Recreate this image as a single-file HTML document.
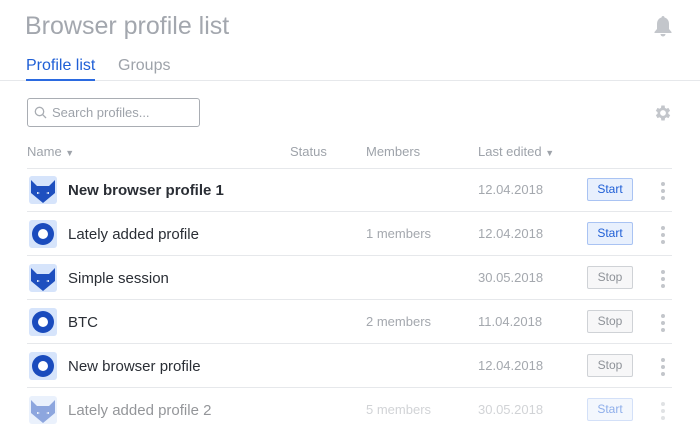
<!DOCTYPE html>
<html><head><style>
body{margin:0;width:700px;height:440px;overflow:hidden;background:#fff;font-family:"Liberation Sans",sans-serif;position:relative}
.a{position:absolute}
.title{left:25px;top:12px;font-size:25px;color:#a3a7ae}
.tab{top:57px;font-size:16px}
.hd{top:144px;font-size:13px;color:#9ea3aa}
.row{position:absolute;left:0;width:700px;height:44px}
.sep{position:absolute;left:27px;width:645px;height:1px;background:#e6e8eb}
.ic{position:absolute;left:29px;top:8px;width:28px;height:28px;background:#d6e4fb;border-radius:3px;overflow:hidden}
.nm{position:absolute;left:68px;top:14px;font-size:15px;color:#2a2e35}
.mem{position:absolute;left:366px;top:14px;font-size:13px;color:#a4a8ae}
.dt{position:absolute;left:478px;top:14px;font-size:13px;color:#a4a8ae}
.btn{position:absolute;left:587px;top:10px;width:46px;height:23px;border-radius:2px;font-size:12px;text-align:center;line-height:21px;box-sizing:border-box}
.start{background:#e8f0fd;border:1px solid #a9c3f3;color:#1f5fd6}
.stop{background:#f7f7f8;border:1px solid #cfd2d6;color:#8e9298}
.dots{position:absolute;left:661px;top:14px;width:4px}
.dots i{display:block;width:4px;height:4px;border-radius:2px;background:#c3c6cb;margin-bottom:3px}
</style></head><body>
<div class="a title">Browser profile list</div>
<svg class="a" style="left:653px;top:15px" width="20" height="22" viewBox="0 0 20 22"><path d="M10 1c1 0 1.5.7 1.5 1.5 3 .8 4.5 3.3 4.5 6.5v5l2.5 3v1H1.5v-1L4 14V9c0-3.2 1.5-5.7 4.5-6.5C8.5 1.7 9 1 10 1z" fill="#c3c6cb"/><path d="M7.5 19h5a2.5 2.5 0 0 1-5 0z" fill="#c3c6cb"/></svg>
<div class="a tab" style="left:26px;color:#1f5fd6">Profile list</div>
<div class="a tab" style="left:118px;color:#9ea3aa">Groups</div>
<div class="a" style="left:0;top:80px;width:700px;height:1px;background:#e6e8eb"></div>
<div class="a" style="left:26px;top:79px;width:69px;height:2px;background:#2b6ae0"></div>
<div class="a" style="left:27px;top:98px;width:173px;height:29px;border:1px solid #a9adb3;border-radius:3px;box-sizing:border-box"></div>
<svg class="a" style="left:34px;top:106px" width="13" height="13" viewBox="0 0 13 13"><circle cx="5.5" cy="5.5" r="4.2" stroke="#a9adb3" stroke-width="1.3" fill="none"/><path d="M8.6 8.6L12 12" stroke="#a9adb3" stroke-width="1.3"/></svg>
<div class="a" style="left:52px;top:105px;font-size:13px;color:#9ea3aa">Search profiles...</div>
<svg class="a" style="left:653px;top:103px" width="20" height="20" viewBox="0 0 24 24"><path fill="#c3c6cb" d="M19.4 13a7.5 7.5 0 0 0 0-2l2.1-1.6-2-3.5-2.5 1a7 7 0 0 0-1.7-1L15 3h-4l-.4 2.9a7 7 0 0 0-1.700 1l-2.5-1-2 3.5L6.5 11a7.500 7.500 0 0 0 0 2l-2.100 1.6 2 3.5 2.5-1a7 7 0 0 0 1.7 1L11 21h4l.4-2.9a7 7 0 0 0 1.7-1l2.5 1 2-3.5zM13 15.5a3.5 3.5 0 1 1 0-7 3.5 3.5 0 0 1 0 7z" transform="translate(-1 0)"/></svg>
<div class="a hd" style="left:27px">Name <span style="font-size:9px">▼</span></div>
<div class="a hd" style="left:290px">Status</div>
<div class="a hd" style="left:366px">Members</div>
<div class="a hd" style="left:478px">Last edited <span style="font-size:9px">▼</span></div>
<div class="sep" style="top:168px"></div>

<div class="row" style="top:168px"><div class="ic"><svg width="28" height="28" viewBox="0 0 28 28"><path d="M2 4l6 6h12l6-6v13l-12 10L2 17z" fill="#1e4fbf"/><path d="M8 16l3 1-3 1zM20 16l-3 1 3 1z" fill="#fff"/></svg></div><div class="nm" style="font-weight:bold">New browser profile 1</div><div class="dt">12.04.2018</div><div class="btn start">Start</div><div class="dots"><i></i><i></i><i></i></div><div class="sep" style="top:43px"></div></div>

<div class="row" style="top:212px"><div class="ic"><svg width="28" height="28" viewBox="0 0 28 28"><circle cx="14" cy="14" r="11" fill="#1a4bbd"/><circle cx="14" cy="14" r="5" fill="#fff"/></svg></div><div class="nm">Lately added profile</div><div class="mem">1 members</div><div class="dt">12.04.2018</div><div class="btn start">Start</div><div class="dots"><i></i><i></i><i></i></div><div class="sep" style="top:43px"></div></div>

<div class="row" style="top:256px"><div class="ic"><svg width="28" height="28" viewBox="0 0 28 28"><path d="M2 4l6 6h12l6-6v13l-12 10L2 17z" fill="#1e4fbf"/><path d="M8 16l3 1-3 1zM20 16l-3 1 3 1z" fill="#fff"/></svg></div><div class="nm">Simple session</div><div class="dt">30.05.2018</div><div class="btn stop">Stop</div><div class="dots"><i></i><i></i><i></i></div><div class="sep" style="top:43px"></div></div>

<div class="row" style="top:300px"><div class="ic"><svg width="28" height="28" viewBox="0 0 28 28"><circle cx="14" cy="14" r="11" fill="#1a4bbd"/><circle cx="14" cy="14" r="5" fill="#fff"/></svg></div><div class="nm">BTC</div><div class="mem">2 members</div><div class="dt">11.04.2018</div><div class="btn stop">Stop</div><div class="dots"><i></i><i></i><i></i></div><div class="sep" style="top:43px"></div></div>

<div class="row" style="top:344px"><div class="ic"><svg width="28" height="28" viewBox="0 0 28 28"><circle cx="14" cy="14" r="11" fill="#1a4bbd"/><circle cx="14" cy="14" r="5" fill="#fff"/></svg></div><div class="nm">New browser profile</div><div class="dt">12.04.2018</div><div class="btn stop">Stop</div><div class="dots"><i></i><i></i><i></i></div><div class="sep" style="top:43px"></div></div>

<div class="row" style="top:388px;opacity:.5"><div class="ic"><svg width="28" height="28" viewBox="0 0 28 28"><path d="M2 4l6 6h12l6-6v13l-12 10L2 17z" fill="#1e4fbf"/><path d="M8 16l3 1-3 1zM20 16l-3 1 3 1z" fill="#fff"/></svg></div><div class="nm">Lately added profile 2</div><div class="mem">5 members</div><div class="dt">30.05.2018</div><div class="btn start">Start</div><div class="dots"><i></i><i></i><i></i></div></div>
</body></html>
